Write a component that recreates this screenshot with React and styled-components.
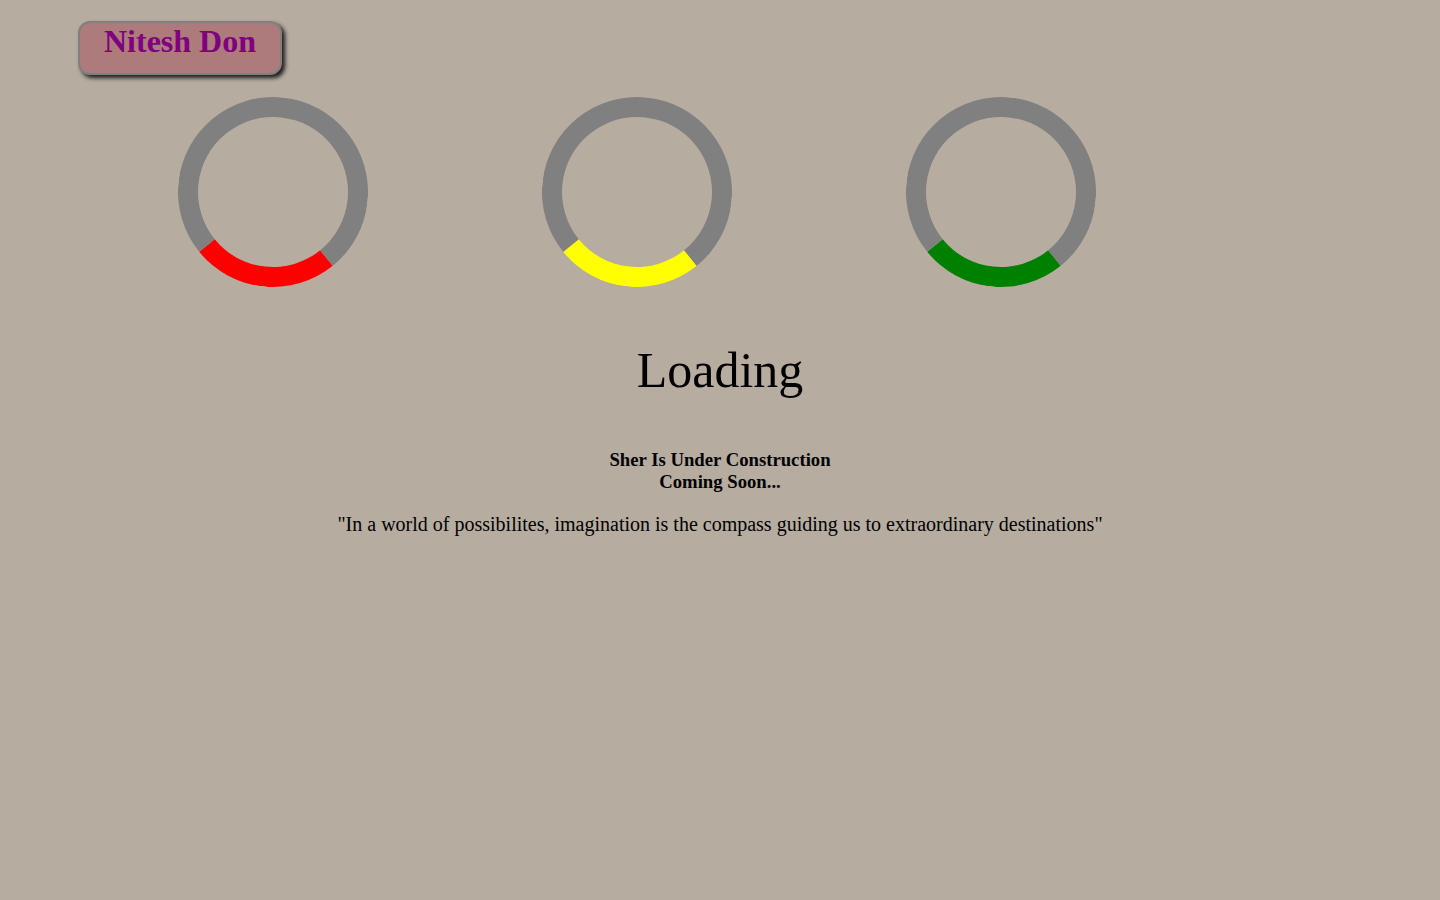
import React from 'react'
import styled, { createGlobalStyle } from 'styled-components'

const GlobalStyle = createGlobalStyle`
    html, body {
        margin: 0;
        padding: 0;
        background-color: #b6ada0;
        font-family: "Liberation Serif", "Times New Roman", serif;
        color: #000;
    }
`

const StPage = styled.div`
    min-height: 900px;
    display: flex;
    flex-direction: column;
`

const StHeader = styled.header`
    display: flex;
    padding: 21px 0 0 78px;
`

const StLogoBadge = styled.div`
    width: 200px;
    height: 50px;
    border: 2px solid #808080;
    border-radius: 12px;
    background-color: #ad7b7b;
    box-shadow: 3px 3px 4px rgba(0, 0, 0, 0.85);
    color: #800080;
    font-size: 32px;
    font-weight: bold;
    line-height: 37px;
    text-align: center;
`

const StSpinnerRow = styled.div`
    display: flex;
    gap: 174px;
    margin-top: 22px;
    padding-left: 178px;
`

const StSpinner = styled.div`
    width: 150px;
    height: 150px;
    border: 20px solid #808080;
    border-bottom-color: ${({ $color }) => $color};
    border-radius: 50%;
    transform: rotate(6deg);
`

const StTitle = styled.h1`
    margin: 55px 0 0;
    font-size: 50px;
    font-weight: normal;
    line-height: 57.5px;
    text-align: center;
`

const StSubTitle = styled.h3`
    margin: 49px 0 0;
    font-size: 18.72px;
    font-weight: bold;
    line-height: 22px;
    text-align: center;
`

const StQuote = styled.p`
    margin: 20px 0 0;
    font-size: 20px;
    line-height: 23px;
    text-align: center;
`

const spinnerColors = ['red', 'yellow', 'green']

const App = () => {
    return (
        <StPage>
            <GlobalStyle />
            <StHeader>
                <StLogoBadge>Nitesh Don</StLogoBadge>
            </StHeader>
            <StSpinnerRow>
                {spinnerColors.map((color) => (
                    <StSpinner key={color} $color={color} />
                ))}
            </StSpinnerRow>
            <StTitle>Loading</StTitle>
            <StSubTitle>
                Sher Is Under Construction
                <br />
                Coming Soon...
            </StSubTitle>
            <StQuote>"In a world of possibilites, imagination is the compass guiding us to extraordinary destinations"</StQuote>
        </StPage>
    )
}

export default App
